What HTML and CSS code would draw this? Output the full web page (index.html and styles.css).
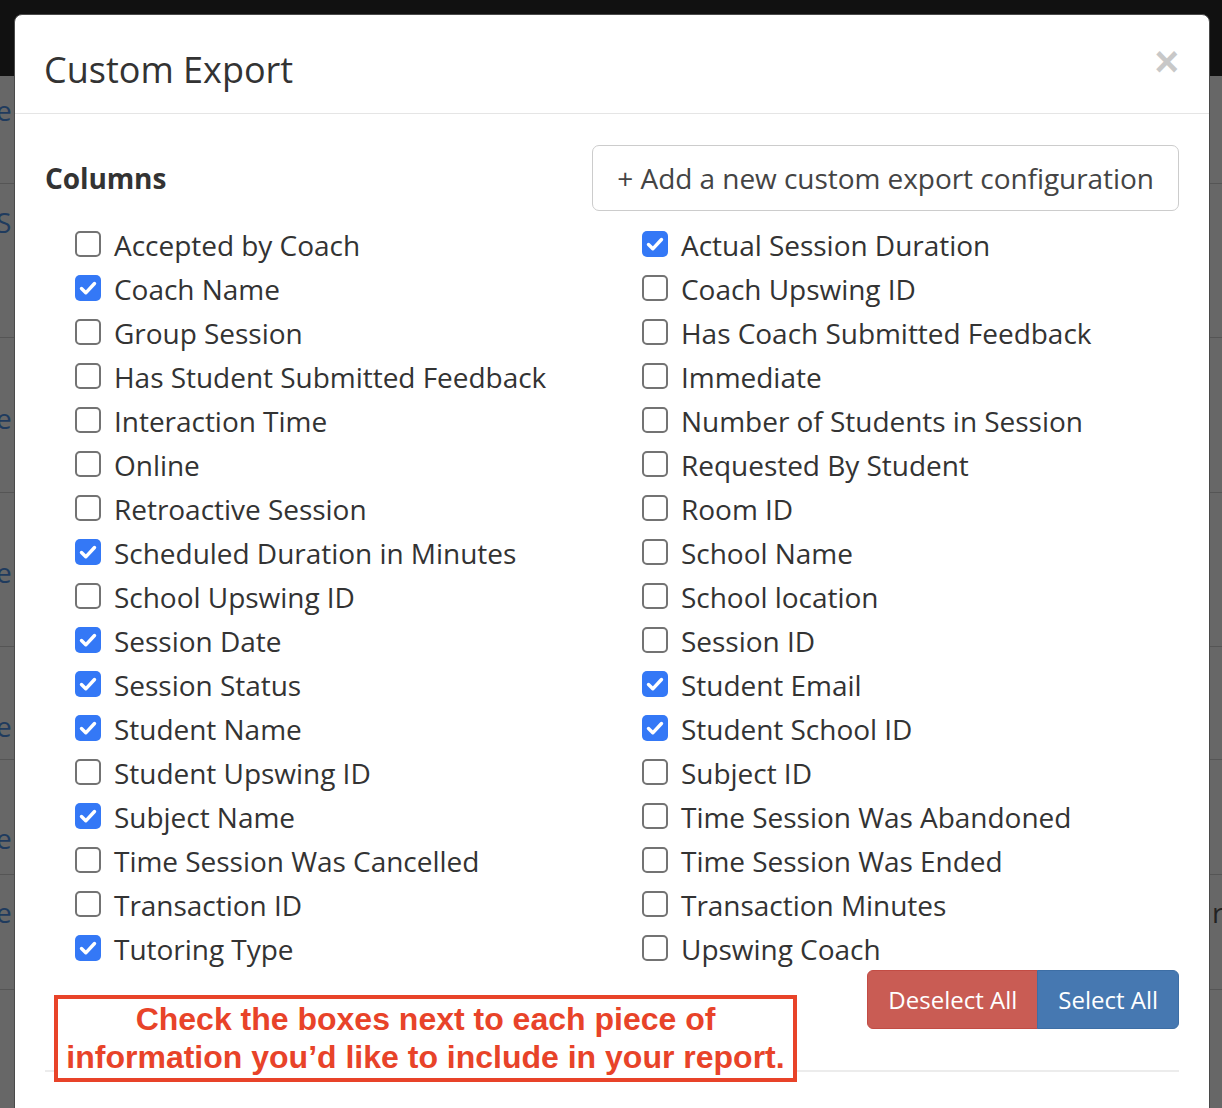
FILE: index.html
```html
<!DOCTYPE html>
<html lang="en">
<head>
<meta charset="utf-8">
<title>Custom Export</title>
<link rel="stylesheet" href="styles.css">
</head>
<body>
<div class="page">
  <div class="navbar"></div>
  <div class="rows">
    <div class="row row-1"><span class="peek">e</span><span class="peek-r"></span></div>
    <div class="row row-2"><span class="peek">S</span><span class="peek-r"></span></div>
    <div class="row row-3"><span class="peek">e</span><span class="peek-r"></span></div>
    <div class="row row-4"><span class="peek">e</span><span class="peek-r"></span></div>
    <div class="row row-5"><span class="peek">e</span><span class="peek-r"></span></div>
    <div class="row row-6"><span class="peek">e</span><span class="peek-r"></span></div>
    <div class="row row-7"><span class="peek">e</span><span class="peek-r">r</span></div>
    <div class="row row-8"></div>
  </div>
</div>

<div class="modal">
  <div class="modal-header">
    <h4 class="modal-title">Custom Export</h4>
    <button class="close" type="button">×</button>
  </div>
  <div class="modal-body">
    <div class="columns-head">
      <h3 class="columns-title">Columns</h3>
      <button class="btn-add" type="button">+ Add a new custom export configuration</button>
    </div>
    <div class="grid">
      <label class="item"><span class="cb"></span>Accepted by Coach</label>
      <label class="item"><span class="cb on"><svg viewBox="0 0 26 26"><path d="M6.5 13.5l4.3 4.3L19.5 8.5"/></svg></span>Actual Session Duration</label>
      <label class="item"><span class="cb on"><svg viewBox="0 0 26 26"><path d="M6.5 13.5l4.3 4.3L19.5 8.5"/></svg></span>Coach Name</label>
      <label class="item"><span class="cb"></span>Coach Upswing ID</label>
      <label class="item"><span class="cb"></span>Group Session</label>
      <label class="item"><span class="cb"></span>Has Coach Submitted Feedback</label>
      <label class="item"><span class="cb"></span>Has Student Submitted Feedback</label>
      <label class="item"><span class="cb"></span>Immediate</label>
      <label class="item"><span class="cb"></span>Interaction Time</label>
      <label class="item"><span class="cb"></span>Number of Students in Session</label>
      <label class="item"><span class="cb"></span>Online</label>
      <label class="item"><span class="cb"></span>Requested By Student</label>
      <label class="item"><span class="cb"></span>Retroactive Session</label>
      <label class="item"><span class="cb"></span>Room ID</label>
      <label class="item"><span class="cb on"><svg viewBox="0 0 26 26"><path d="M6.5 13.5l4.3 4.3L19.5 8.5"/></svg></span>Scheduled Duration in Minutes</label>
      <label class="item"><span class="cb"></span>School Name</label>
      <label class="item"><span class="cb"></span>School Upswing ID</label>
      <label class="item"><span class="cb"></span>School location</label>
      <label class="item"><span class="cb on"><svg viewBox="0 0 26 26"><path d="M6.5 13.5l4.3 4.3L19.5 8.5"/></svg></span>Session Date</label>
      <label class="item"><span class="cb"></span>Session ID</label>
      <label class="item"><span class="cb on"><svg viewBox="0 0 26 26"><path d="M6.5 13.5l4.3 4.3L19.5 8.5"/></svg></span>Session Status</label>
      <label class="item"><span class="cb on"><svg viewBox="0 0 26 26"><path d="M6.5 13.5l4.3 4.3L19.5 8.5"/></svg></span>Student Email</label>
      <label class="item"><span class="cb on"><svg viewBox="0 0 26 26"><path d="M6.5 13.5l4.3 4.3L19.5 8.5"/></svg></span>Student Name</label>
      <label class="item"><span class="cb on"><svg viewBox="0 0 26 26"><path d="M6.5 13.5l4.3 4.3L19.5 8.5"/></svg></span>Student School ID</label>
      <label class="item"><span class="cb"></span>Student Upswing ID</label>
      <label class="item"><span class="cb"></span>Subject ID</label>
      <label class="item"><span class="cb on"><svg viewBox="0 0 26 26"><path d="M6.5 13.5l4.3 4.3L19.5 8.5"/></svg></span>Subject Name</label>
      <label class="item"><span class="cb"></span>Time Session Was Abandoned</label>
      <label class="item"><span class="cb"></span>Time Session Was Cancelled</label>
      <label class="item"><span class="cb"></span>Time Session Was Ended</label>
      <label class="item"><span class="cb"></span>Transaction ID</label>
      <label class="item"><span class="cb"></span>Transaction Minutes</label>
      <label class="item"><span class="cb on"><svg viewBox="0 0 26 26"><path d="M6.5 13.5l4.3 4.3L19.5 8.5"/></svg></span>Tutoring Type</label>
      <label class="item"><span class="cb"></span>Upswing Coach</label>
    </div>
    <div class="actions">
      <button class="btn btn-danger" type="button">Deselect All</button>
      <button class="btn btn-primary" type="button">Select All</button>
    </div>
    <div class="divider"></div>
  </div>
  <div class="callout">Check the boxes next to each piece of<br>information you’d like to include in your report.</div>
</div>
</body>
</html>
```

FILE: styles.css
```css
* { box-sizing: border-box; }

html, body {
  margin: 0;
  padding: 0;
  height: 100%;
  overflow: hidden;
}

body {
  font-family: "Open Sans", "DejaVu Sans", sans-serif;
  background: #676767;
  color: #333;
}

/* ---------- page behind the modal ---------- */
.page {
  display: flex;
  flex-direction: column;
  height: 1108px;
}

.navbar {
  height: 76px;
  background: #111;
  flex: none;
}

.rows {
  flex: 1;
  display: grid;
  grid-template-rows: 108px 154px 155px 154px 113px 115px 115px 1fr;
}

.row {
  display: flex;
  justify-content: space-between;
  border-bottom: 1px solid #555;
  font-size: 28px;
  line-height: 40px;
  color: #1f3b5e;
}

.row-8 { border-bottom: 0; }

.peek { margin-left: -4px; }
.peek-r { margin-right: -6px; width: 16px; color: #222; }

.row-1 { padding-top: 14px; }
.row-2 { padding-top: 18px; }
.row-3 { padding-top: 60px; }
.row-4 { padding-top: 59px; }
.row-5 { padding-top: 59px; }
.row-6 { padding-top: 58px; }
.row-7 { padding-top: 17px; }

/* ---------- modal ---------- */
.modal {
  position: absolute;
  left: 14px;
  top: 14px;
  width: 1196px;
  height: 1120px;
  background: #fff;
  border: 1px solid #4a4a4a;
  border-radius: 8px;
}

.modal-header {
  display: flex;
  justify-content: space-between;
  align-items: flex-start;
  padding: 35px 30px 23px 29px;
  border-bottom: 1px solid #e5e5e5;
}

.modal-title {
  margin: 0;
  font-size: 36px;
  line-height: 40px;
  font-weight: 400;
  color: #333;
}

.close {
  margin: -9px 0 0 0;
  padding: 0;
  border: 0;
  background: none;
  font-family: "Liberation Sans", Arial, sans-serif;
  font-size: 42px;
  font-weight: 700;
  line-height: 1;
  color: #c8c8c8;
}

.modal-body {
  padding: 31px 30px 0 30px;
}

.columns-head {
  display: flex;
  justify-content: space-between;
  align-items: center;
}

.columns-title {
  margin: 0;
  font-size: 28px;
  font-weight: 700;
  line-height: 40px;
  color: #333;
  letter-spacing: -0.1px;
}

.btn-add {
  font-family: inherit;
  font-size: 28px;
  line-height: 40px;
  padding: 12px 24px 12px 24px;
  border: 1px solid #ccc;
  border-radius: 7px;
  background: #fff;
  color: #444;
  letter-spacing: -0.05px;
}

.grid {
  margin-top: 12px;
  display: grid;
  grid-template-columns: 1fr 1fr;
  grid-auto-rows: 44px;
}

.item {
  display: flex;
  align-items: center;
  padding-left: 30px;
  font-size: 28px;
  line-height: 44px;
  color: #333;
  letter-spacing: -0.03px;
}

.cb {
  flex: none;
  width: 26px;
  height: 26px;
  margin: -2px 13px 0 0;
  border: 2px solid #737373;
  border-radius: 5px;
  background: #fff;
}

.cb.on {
  border: 0;
  background: #3478f6;
}

.cb svg {
  display: block;
  width: 26px;
  height: 26px;
}

.cb svg path {
  fill: none;
  stroke: #fff;
  stroke-width: 3.4;
  stroke-linecap: round;
  stroke-linejoin: round;
}

.actions {
  margin-top: -1px;
  display: flex;
  justify-content: flex-end;
}

.btn {
  font-family: inherit;
  font-size: 24px;
  line-height: 33px;
  padding: 12px 20px;
  color: #fff;
  border: 1px solid;
}

.btn-danger {
  background: #c95c54;
  border-color: #c24c44;
  border-radius: 6px 0 0 6px;
}

.btn-primary {
  background: #4678b1;
  border-color: #3d6ea5;
  border-radius: 0 6px 6px 0;
  margin-left: -1px;
}

.divider {
  margin-top: 41px;
  border-top: 2px solid #ececec;
}

/* ---------- annotation ---------- */
.callout {
  position: absolute;
  left: 39px;
  top: 980px;
  width: 743px;
  height: 87px;
  border: 4px solid #e84329;
  background: #fff;
  color: #e84329;
  font-family: "Liberation Sans", Arial, sans-serif;
  font-weight: 700;
  font-size: 32px;
  line-height: 38px;
  text-align: center;
  padding-top: 1px;
  white-space: nowrap;
}
```
